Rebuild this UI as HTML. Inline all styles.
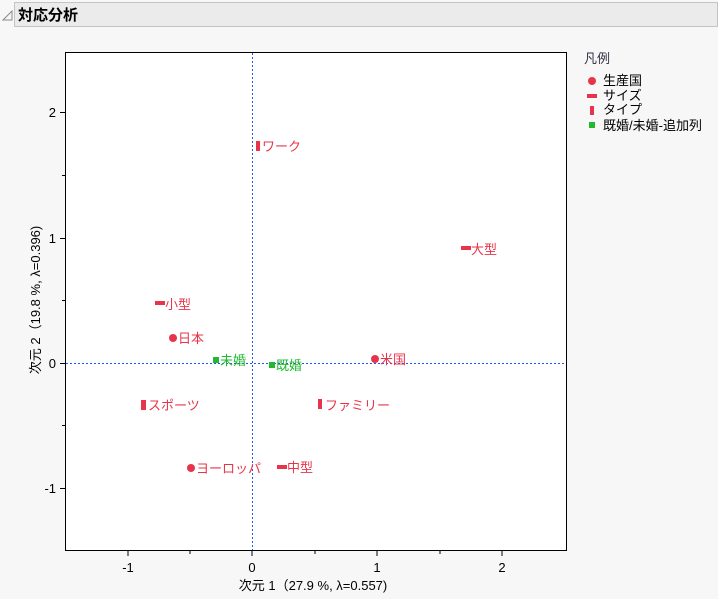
<!DOCTYPE html>
<html><head><meta charset="utf-8"><style>
body{margin:0;width:718px;height:599px;background:#f7f7f7;overflow:hidden;font-family:"Liberation Sans","Noto Sans CJK JP",sans-serif;}
.hdr{position:absolute;left:14px;top:2px;width:702px;height:23px;background:#ebebeb;border:1px solid #c4c4c4;}
.hdr span{position:absolute;left:3px;top:1px;font-weight:bold;font-size:15px;color:#000;}
</style></head><body>
<svg width="12" height="12" style="position:absolute;left:2px;top:10px"><path d="M1 10 L10 10 L10 1 Z" fill="none" stroke="#888" stroke-width="1"/></svg>
<div class="hdr"><span>対応分析</span></div>
<svg width="718" height="599" style="position:absolute;left:0;top:0" font-family="Liberation Sans, Noto Sans CJK JP, sans-serif" font-size="13">
<rect x="65.5" y="52.5" width="501" height="498" fill="#fff" stroke="#000"/>
<line x1="252.5" y1="53" x2="252.5" y2="550" stroke="#2255ee" stroke-dasharray="2,2"/>
<line x1="66" y1="363.5" x2="566" y2="363.5" stroke="#2255ee" stroke-dasharray="2,2"/>
<g stroke="#000">
<line x1="128" y1="551" x2="128" y2="556"/><line x1="252" y1="551" x2="252" y2="556"/><line x1="377" y1="551" x2="377" y2="556"/><line x1="502" y1="551" x2="502" y2="556"/>
<line x1="190" y1="551" x2="190" y2="554"/><line x1="315" y1="551" x2="315" y2="554"/><line x1="440" y1="551" x2="440" y2="554"/>
<line x1="60" y1="112.5" x2="65" y2="112.5"/><line x1="60" y1="238.5" x2="65" y2="238.5"/><line x1="60" y1="363.5" x2="65" y2="363.5"/><line x1="60" y1="488.5" x2="65" y2="488.5"/>
<line x1="62" y1="175.5" x2="65" y2="175.5"/><line x1="62" y1="300.5" x2="65" y2="300.5"/><line x1="62" y1="425.5" x2="65" y2="425.5"/>
</g>
<g fill="#000">
<text x="128" y="572" text-anchor="middle">-1</text><text x="252" y="572" text-anchor="middle">0</text><text x="377" y="572" text-anchor="middle">1</text><text x="502" y="572" text-anchor="middle">2</text>
<text x="56" y="117" text-anchor="end">2</text><text x="56" y="243" text-anchor="end">1</text><text x="56" y="368" text-anchor="end">0</text><text x="56" y="493" text-anchor="end">-1</text>
<text x="313" y="590" text-anchor="middle">次元 1（27.9 %, λ=0.557)</text>
<text transform="translate(40,300) rotate(-90)" text-anchor="middle">次元 2（19.8 %, λ=0.396)</text>
</g>
<g fill="#e8344a">
<rect x="256" y="141" width="4" height="10"/><text x="262" y="151">ワーク</text>
<rect x="461" y="246" width="10" height="4"/><text x="471" y="254">大型</text>
<rect x="155" y="301" width="10" height="4"/><text x="165" y="309">小型</text>
<circle cx="173" cy="338" r="4"/><text x="178" y="343">日本</text>
<circle cx="375" cy="359" r="4"/><text x="380" y="364">米国</text>
<rect x="141" y="400" width="5" height="10"/><text x="148" y="410">スポーツ</text>
<rect x="318" y="399" width="4" height="10"/><text x="325" y="410">ファミリー</text>
<circle cx="191" cy="468" r="4"/><text x="196" y="473">ヨーロッパ</text>
<rect x="277" y="465" width="10" height="4"/><text x="287" y="472">中型</text>
</g>
<g fill="#22b830">
<rect x="213" y="357" width="6" height="6"/><text x="220" y="365">未婚</text>
<rect x="269" y="362" width="6" height="6"/><text x="276" y="370">既婚</text>
</g>
<g font-size="13">
<text x="584" y="63" fill="#334">凡例</text>
<circle cx="592" cy="81" r="4" fill="#e8344a"/><text x="603" y="85" fill="#000">生産国</text>
<rect x="587" y="94" width="10" height="4" fill="#e8344a"/><text x="603" y="100" fill="#000">サイズ</text>
<rect x="590" y="106" width="4" height="9" fill="#e8344a"/><text x="603" y="114" fill="#000">タイプ</text>
<rect x="589" y="122" width="6" height="6" fill="#22b830"/><text x="603" y="130" fill="#000">既婚/未婚-追加列</text>
</g>
</svg>
</body></html>
